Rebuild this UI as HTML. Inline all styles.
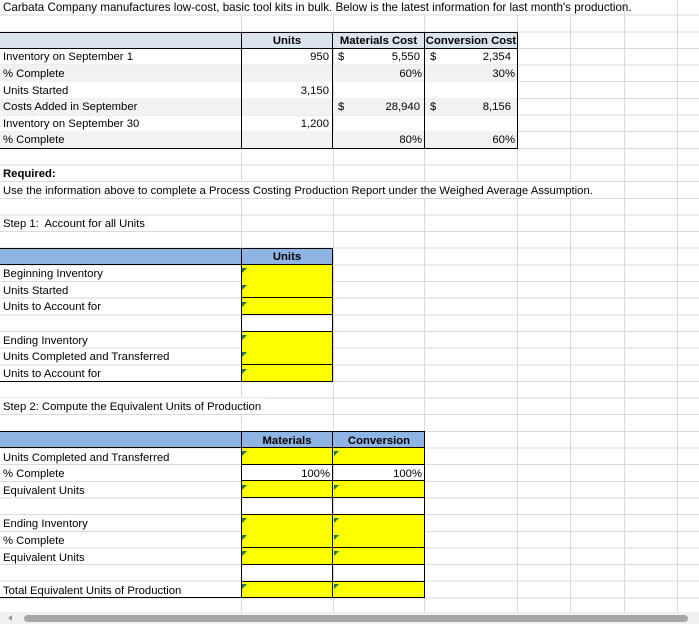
<!DOCTYPE html>
<html><head><meta charset="utf-8"><style>
html,body{margin:0;padding:0}
body{width:699px;height:624px;position:relative;overflow:hidden;background:#fff;font-family:"Liberation Sans",Arial,sans-serif;font-size:11.3px;color:#000}
.grid{position:absolute;left:0;top:0;width:699px;height:612px;
background-image:repeating-linear-gradient(to bottom,transparent 0,transparent 15.65px,#dadada 15.65px,#dadada 16.65px);
background-position:0 -1px}
.v{position:absolute;top:0;height:612px;width:1px;background:#dadada}
.t{position:absolute;height:16px;line-height:19px;white-space:nowrap}
.r{text-align:right}
.b{font-weight:bold}
.bx{position:absolute;box-sizing:border-box}
.y{position:absolute;background:#ffff00}
.g{position:absolute;width:0;height:0;border-top:5px solid #1f7a52;border-right:5px solid transparent}
.k{position:absolute;background:#000}
</style></head><body>
<div class="grid"></div>
<div class="v" style="left:241px"></div><div class="v" style="left:333px"></div><div class="v" style="left:424px"></div><div class="v" style="left:517px"></div><div class="v" style="left:570px"></div><div class="v" style="left:624px"></div><div class="v" style="left:677px"></div>

<div class="t" style="left:0;top:-2px;width:616px;background:#fff;padding-left:3px;font-size:11.6px">Carbata Company manufactures low-cost, basic tool kits in bulk. Below is the latest information for last month's production.</div>

<!-- top table -->
<div class="bx" style="left:0;top:32px;width:518px;height:16px;background:#dde3ed"></div>
<div class="bx" style="left:0;top:65px;width:518px;height:17px;background:#f2f2f2"></div>
<div class="bx" style="left:0;top:98px;width:518px;height:17px;background:#f2f2f2"></div>
<div class="bx" style="left:0;top:131px;width:518px;height:17px;background:#f2f2f2"></div>
<div class="k" style="left:0;top:32px;width:518px;height:1px"></div>
<div class="k" style="left:0;top:48px;width:518px;height:1px"></div>
<div class="k" style="left:0;top:148px;width:518px;height:1px"></div>
<div class="k" style="left:241px;top:32px;width:1px;height:117px"></div>
<div class="k" style="left:332px;top:32px;width:1px;height:117px"></div>
<div class="k" style="left:424px;top:32px;width:1px;height:117px"></div>
<div class="k" style="left:517px;top:32px;width:1px;height:117px"></div>
<div class="t b" style="left:241px;top:32px;width:92px;text-align:center">Units</div>
<div class="t b" style="left:333px;top:32px;width:91px;text-align:center">Materials Cost</div>
<div class="t b" style="left:425px;top:32px;width:92px;text-align:center">Conversion Cost</div>
<div class="t" style="left:3px;top:48px">Inventory on September 1</div>
<div class="t" style="left:3px;top:65px">% Complete</div>
<div class="t" style="left:3px;top:82px">Units Started</div>
<div class="t" style="left:3px;top:98px">Costs Added in September</div>
<div class="t" style="left:3px;top:115px">Inventory on September 30</div>
<div class="t" style="left:3px;top:131px">% Complete</div>
<div class="t r" style="left:241px;top:48px;width:88px">950</div>
<div class="t r" style="left:241px;top:82px;width:88px">3,150</div>
<div class="t r" style="left:241px;top:115px;width:88px">1,200</div>
<div class="t" style="left:338px;top:48px">$</div>
<div class="t" style="left:338px;top:98px">$</div>
<div class="t r" style="left:333px;top:48px;width:87px">5,550</div>
<div class="t r" style="left:333px;top:65px;width:89px">60%</div>
<div class="t r" style="left:333px;top:98px;width:87px">28,940</div>
<div class="t r" style="left:333px;top:131px;width:89px">80%</div>
<div class="t" style="left:430px;top:48px">$</div>
<div class="t" style="left:430px;top:98px">$</div>
<div class="t r" style="left:425px;top:48px;width:86px">2,354</div>
<div class="t r" style="left:425px;top:65px;width:90px">30%</div>
<div class="t r" style="left:425px;top:98px;width:86px">8,156</div>
<div class="t r" style="left:425px;top:131px;width:90px">60%</div>

<div class="t b" style="left:3px;top:165px">Required:</div>
<div class="t" style="left:0;top:182px;width:592px;background:#fff;padding-left:3px">Use the information above to complete a Process Costing Production Report under the Weighed Average Assumption.</div>
<div class="t" style="left:3px;top:215px">Step 1:&nbsp; Account for all Units</div>

<!-- step 1 -->
<div class="bx" style="left:0;top:248px;width:333px;height:16px;background:#8db4e2"></div>
<div class="k" style="left:0;top:248px;width:333px;height:1px"></div>
<div class="k" style="left:0;top:264px;width:333px;height:1px"></div>
<div class="t b" style="left:241px;top:248px;width:92px;text-align:center">Units</div>
<div class="y" style="left:242px;top:265px;width:90px;height:49px"></div>
<div class="y" style="left:242px;top:331px;width:90px;height:50px"></div>
<div class="k" style="left:241px;top:248px;width:1px;height:134px"></div>
<div class="k" style="left:332px;top:248px;width:1px;height:134px"></div>
<div class="k" style="left:241px;top:297px;width:92px;height:1px"></div>
<div class="k" style="left:241px;top:314px;width:92px;height:1px"></div>
<div class="k" style="left:241px;top:331px;width:92px;height:1px"></div>
<div class="k" style="left:241px;top:364px;width:92px;height:1px"></div>
<div class="k" style="left:0;top:381px;width:333px;height:1px"></div>
<div class="g" style="left:242px;top:268px"></div><div class="g" style="left:242px;top:285px"></div><div class="g" style="left:242px;top:302px"></div>
<div class="g" style="left:242px;top:335px"></div><div class="g" style="left:242px;top:352px"></div><div class="g" style="left:242px;top:369px"></div>
<div class="t" style="left:3px;top:265px">Beginning Inventory</div>
<div class="t" style="left:3px;top:282px">Units Started</div>
<div class="t" style="left:3px;top:298px">Units to Account for</div>
<div class="t" style="left:3px;top:332px">Ending Inventory</div>
<div class="t" style="left:3px;top:348px">Units Completed and Transferred</div>
<div class="t" style="left:3px;top:365px">Units to Account for</div>

<div class="t" style="left:0;top:398px;width:262px;background:#fff;padding-left:3px">Step 2: Compute the Equivalent Units of Production</div>

<!-- step 2 -->
<div class="bx" style="left:0;top:431px;width:425px;height:16px;background:#8db4e2"></div>
<div class="k" style="left:0;top:431px;width:425px;height:1px"></div>
<div class="k" style="left:0;top:447px;width:425px;height:1px"></div>
<div class="t b" style="left:241px;top:432px;width:92px;text-align:center">Materials</div>
<div class="t b" style="left:333px;top:432px;width:92px;text-align:center">Conversion</div>
<div class="y" style="left:242px;top:448px;width:182px;height:16px"></div>
<div class="y" style="left:242px;top:481px;width:182px;height:16px"></div>
<div class="y" style="left:242px;top:514px;width:182px;height:50px"></div>
<div class="y" style="left:242px;top:581px;width:182px;height:16px"></div>
<div class="k" style="left:241px;top:431px;width:1px;height:167px"></div>
<div class="k" style="left:332px;top:431px;width:1px;height:167px"></div>
<div class="k" style="left:424px;top:431px;width:1px;height:167px"></div>
<div class="k" style="left:241px;top:464px;width:184px;height:1px"></div>
<div class="k" style="left:241px;top:480px;width:184px;height:1px"></div>
<div class="k" style="left:241px;top:497px;width:184px;height:1px"></div>
<div class="k" style="left:241px;top:514px;width:184px;height:1px"></div>
<div class="k" style="left:241px;top:547px;width:184px;height:1px"></div>
<div class="k" style="left:241px;top:564px;width:184px;height:1px"></div>
<div class="k" style="left:241px;top:581px;width:184px;height:1px"></div>
<div class="k" style="left:0;top:597px;width:425px;height:1px"></div>
<div class="g" style="left:242px;top:451px"></div><div class="g" style="left:334px;top:451px"></div>
<div class="g" style="left:242px;top:485px"></div><div class="g" style="left:334px;top:485px"></div>
<div class="g" style="left:242px;top:518px"></div><div class="g" style="left:334px;top:518px"></div>
<div class="g" style="left:242px;top:535px"></div><div class="g" style="left:334px;top:535px"></div>
<div class="g" style="left:242px;top:551px"></div><div class="g" style="left:334px;top:551px"></div>
<div class="g" style="left:242px;top:584px"></div><div class="g" style="left:334px;top:584px"></div>
<div class="t r" style="left:241px;top:465px;width:89px">100%</div>
<div class="t r" style="left:333px;top:465px;width:89px">100%</div>
<div class="t" style="left:3px;top:449px">Units Completed and Transferred</div>
<div class="t" style="left:3px;top:465px">% Complete</div>
<div class="t" style="left:3px;top:482px">Equivalent Units</div>
<div class="t" style="left:3px;top:515px">Ending Inventory</div>
<div class="t" style="left:3px;top:532px">% Complete</div>
<div class="t" style="left:3px;top:549px">Equivalent Units</div>
<div class="t" style="left:3px;top:582px">Total Equivalent Units of Production</div>

<!-- scrollbar -->
<div style="position:absolute;left:0;top:612px;width:699px;height:12px;background:#f0f0f0"></div>
<div style="position:absolute;left:8px;top:615px;width:0;height:0;border-right:4px solid #999;border-top:3px solid transparent;border-bottom:3px solid transparent"></div>
<div style="position:absolute;left:24px;top:615px;width:664px;height:7px;border-radius:4px;background:#a6a6a6"></div>
</body></html>
